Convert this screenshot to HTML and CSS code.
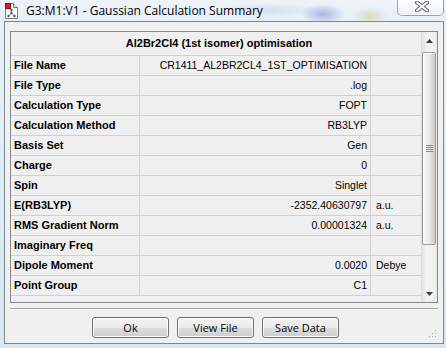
FILE: index.html
```html
<!DOCTYPE html>
<html>
<head>
<meta charset="utf-8">
<link rel="stylesheet" href="styles.css">
</head>
<body>
<div class="window">
  <div class="titlebar">
    <svg class="app-icon" width="13" height="16" viewBox="0 0 13 16">
      <path d="M0.5 0.5 H8.5 L12.5 4.5 V15.5 H0.5 Z" fill="#fff" stroke="#7a7a7a"/>
      <path d="M8.5 0.5 V4.5 H12.5" fill="#e8e8e8" stroke="#7a7a7a"/>
      <path d="M6.5 7 L6.5 10 L3.5 13 M6.5 10 L9.5 13" stroke="#8a8a8a" stroke-width="1" fill="none"/>
      <circle cx="6.5" cy="7" r="1.2" fill="#555"/>
      <circle cx="6.5" cy="10" r="1.2" fill="#555"/>
      <circle cx="3.5" cy="13" r="1.2" fill="#555"/>
      <circle cx="9.5" cy="13" r="1.2" fill="#555"/>
      <rect x="0.5" y="0.5" width="5" height="5" fill="#e81818" stroke="#7a1010"/>
    </svg>
    <span class="title">G3:M1:V1 - Gaussian Calculation Summary</span>
    <div class="close">
      <svg width="14" height="11" viewBox="0 0 14 11">
        <path d="M2 1.5 L12 9.5 M12 1.5 L2 9.5" stroke="#5b6470" stroke-width="4" stroke-linecap="round"/>
        <path d="M2 1.5 L12 9.5 M12 1.5 L2 9.5" stroke="#ffffff" stroke-width="2" stroke-linecap="round"/>
      </svg>
    </div>
  </div>
  <div class="client">
    <div class="list">
      <div class="grid">
        <div class="head">Al2Br2Cl4 (1st isomer) optimisation</div>
        <div class="lbl">File Name</div><div class="val">CR1411_AL2BR2CL4_1ST_OPTIMISATION</div><div class="unit"></div>
        <div class="lbl">File Type</div><div class="val">.log</div><div class="unit"></div>
        <div class="lbl">Calculation Type</div><div class="val">FOPT</div><div class="unit"></div>
        <div class="lbl">Calculation Method</div><div class="val">RB3LYP</div><div class="unit"></div>
        <div class="lbl">Basis Set</div><div class="val">Gen</div><div class="unit"></div>
        <div class="lbl">Charge</div><div class="val">0</div><div class="unit"></div>
        <div class="lbl">Spin</div><div class="val">Singlet</div><div class="unit"></div>
        <div class="lbl">E(RB3LYP)</div><div class="val">-2352.40630797</div><div class="unit">a.u.</div>
        <div class="lbl">RMS Gradient Norm</div><div class="val">0.00001324</div><div class="unit">a.u.</div>
        <div class="lbl">Imaginary Freq</div><div class="val"></div><div class="unit"></div>
        <div class="lbl">Dipole Moment</div><div class="val">0.0020</div><div class="unit">Debye</div>
        <div class="lbl">Point Group</div><div class="val">C1</div><div class="unit"></div>
      </div>
      <div class="vscroll">
        <div class="sb-btn"><svg width="7" height="4" viewBox="0 0 7 4"><path d="M3.5 0 L7 4 H0 Z" fill="#404040"/></svg></div>
        <div class="track">
          <div class="thumb">
            <svg width="7" height="7" viewBox="0 0 7 7"><path d="M0 0.5 H7 M0 2.5 H7 M0 4.5 H7 M0 6.5 H7" stroke="#8a8a8a" stroke-width="1"/></svg>
          </div>
        </div>
        <div class="sb-btn"><svg width="7" height="4" viewBox="0 0 7 4"><path d="M0 0 H7 L3.5 4 Z" fill="#404040"/></svg></div>
      </div>
    </div>
    <div class="sep"></div>
    <div class="buttons">
      <div class="btn">Ok</div>
      <div class="btn">View File</div>
      <div class="btn">Save Data</div>
    </div>
    <svg class="grip" width="8" height="8" viewBox="0 0 8 8">
      <rect x="6" y="0" width="1" height="1" fill="#b0b0b0"/>
      <rect x="3" y="3" width="1" height="1" fill="#b0b0b0"/>
      <rect x="6" y="3" width="1" height="1" fill="#b0b0b0"/>
      <rect x="0" y="6" width="1" height="1" fill="#b0b0b0"/>
      <rect x="3" y="6" width="1" height="1" fill="#b0b0b0"/>
      <rect x="6" y="6" width="1" height="1" fill="#b0b0b0"/>
    </svg>
  </div>
</div>
</body>
</html>
```

FILE: styles.css
```css
html, body {
  margin: 0;
  padding: 0;
}

body {
  width: 446px;
  height: 348px;
  overflow: hidden;
}

.window {
  width: 446px;
  height: 348px;
  background:
    radial-gradient(ellipse 22px 10px at 323px 14px, rgba(90, 110, 200, 0.45), rgba(90, 110, 200, 0)),
    radial-gradient(ellipse 18px 9px at 370px 16px, rgba(200, 170, 80, 0.35), rgba(200, 170, 80, 0)),
    radial-gradient(ellipse 50px 8px at 270px 10px, rgba(150, 170, 210, 0.25), rgba(150, 170, 210, 0)),
    linear-gradient(180deg, #eef3f9 0%, #e6eff8 20px, #d6e9f3 100%);
  display: flex;
  flex-direction: column;
}

.titlebar {
  height: 21px;
  display: flex;
  align-items: flex-start;
  flex: none;
}

.app-icon {
  margin-left: 5px;
  margin-top: 3px;
  flex: none;
}

.title {
  margin-left: 8px;
  margin-top: 2px;
  font-family: "Open Sans", "Noto Sans", sans-serif;
  font-size: 12px;
  line-height: 17px;
  color: #000;
  white-space: nowrap;
}

.close {
  margin-left: auto;
  margin-right: 2px;
  width: 47px;
  height: 16px;
  box-sizing: border-box;
  border: 1px solid rgba(70, 90, 110, 0.55);
  border-top: none;
  border-radius: 0 0 5px 5px;
  background: linear-gradient(180deg, rgba(255, 255, 255, 0.75), rgba(240, 245, 250, 0.45));
  box-shadow: inset 0 0 0 1px rgba(255, 255, 255, 0.6);
  display: flex;
  justify-content: center;
  align-items: flex-start;
  padding-top: 1px;
  padding-left: 2px;
}

.client {
  position: relative;
  margin-left: 4px;
  width: 440px;
  height: 323px;
  box-sizing: border-box;
  border: 1px solid #7d8791;
  background: #f0f0f0;
  padding: 9px 0 5px 5px;
  display: flex;
  flex-direction: column;
  flex: none;
}

.list {
  width: 428px;
  height: 272px;
  box-sizing: border-box;
  border: 1px solid #828790;
  display: flex;
  flex: none;
}

.grid {
  width: 410px;
  display: grid;
  grid-template-columns: 129px 231px 50px;
  grid-template-rows: 24px;
  grid-auto-rows: 20px;
  align-content: start;
  font-family: "Liberation Sans", Arial, sans-serif;
  color: #000;
}

.head {
  grid-column: 1 / -1;
  box-sizing: border-box;
  border-bottom: 1px solid #cfcfcf;
  font-weight: bold;
  font-size: 11px;
  display: flex;
  align-items: center;
  justify-content: center;
  padding-left: 6px;
  padding-bottom: 1px;
}

.lbl, .val, .unit {
  box-sizing: border-box;
  border-bottom: 1px solid #cfcfcf;
  line-height: 19px;
  white-space: nowrap;
  overflow: hidden;
}

.lbl {
  border-right: 1px solid #cfcfcf;
  font-weight: bold;
  font-size: 11px;
  padding-left: 3px;
}

.val {
  border-right: 1px solid #cfcfcf;
  font-size: 10.5px;
  text-align: right;
  padding-right: 3px;
}

.unit {
  font-size: 10.5px;
  padding-left: 5px;
}

.vscroll {
  width: 16px;
  margin-left: 0;
  border-left: 1px solid #dadada;
  background: linear-gradient(90deg, #e3e3e3, #f2f2f2 30%, #f2f2f2 70%, #e8e8e8);
  display: flex;
  flex-direction: column;
}

.sb-btn {
  height: 17px;
  display: flex;
  align-items: center;
  justify-content: center;
  flex: none;
}

.track {
  flex: 1;
  display: flex;
  flex-direction: column;
  padding: 3px 1px 0 0;
}

.thumb {
  height: 193px;
  box-sizing: border-box;
  border: 1px solid #9a9a9a;
  border-radius: 2px;
  background: linear-gradient(90deg, #f8f8f8 0%, #ececec 45%, #d9d9d9 75%, #cbcbcb 100%);
  box-shadow: inset 1px 1px 0 #ffffff;
  display: flex;
  align-items: center;
  justify-content: center;
}

.sep {
  width: 428px;
  height: 0;
  margin-top: 5px;
  border-top: 1px solid #a0a0a0;
  border-bottom: 1px solid #ffffff;
  flex: none;
}

.buttons {
  margin-top: 7px;
  padding-left: 82px;
  display: flex;
  gap: 8px;
}

.btn {
  width: 77px;
  height: 21px;
  box-sizing: border-box;
  border: 1px solid #707070;
  border-radius: 3px;
  background: linear-gradient(180deg, #f2f2f2 0%, #ebebeb 50%, #dddddd 51%, #cfcfcf 100%);
  box-shadow: inset 0 0 0 1px #fbfbfb;
  font-family: "Open Sans", "Noto Sans", sans-serif;
  font-size: 11px;
  color: #000;
  display: flex;
  align-items: center;
  justify-content: center;
  padding-bottom: 1px;
}

.grip {
  position: absolute;
  right: 6px;
  bottom: 5px;
}
```
